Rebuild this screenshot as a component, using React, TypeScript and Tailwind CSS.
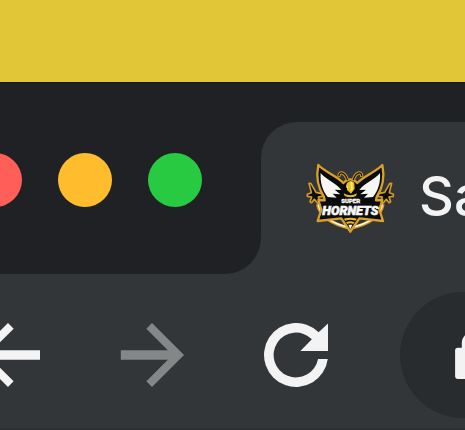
import type { ReactNode } from "react";

function HornetsLogo() {
  return (
    <svg viewBox="15 21 270 216" className="h-[72px] w-[90px] shrink-0" role="img" aria-label="Super Hornets">
      {/* swoosh behind the nameplate */}
      <path d="M53 148 Q62 200 151 220 Q240 200 249 148" fill="none" stroke="#d39a24" strokeWidth="10" />
      <path d="M55 148 Q64 199 151 218 Q238 199 247 148" fill="none" stroke="#fff8e2" strokeWidth="5" />
      {/* jets */}
      <g fill="#0b0d0e" stroke="#d39a24" strokeWidth="5" strokeLinejoin="round">
        <path d="M27 85 L33 86 L48 112 L67 116 L68 124 L55 126 L60 140 L53 145 L43 133 L35 143 L30 140 L35 126 L22 124 L22 118 L34 113 Z" />
        <path d="M275 85 L269 86 L254 112 L235 116 L234 124 L247 126 L242 140 L249 145 L259 133 L267 143 L272 140 L267 126 L280 124 L280 118 L268 113 Z" />
      </g>
      {/* wings and body outline */}
      <path d="M55 30 C76 52 113 64 130 84 Q151 62 172 84 C189 64 226 52 247 30 Q258 83 230 126 L228 136 L247 135 L238 164 L249 198 L178 190 L151 230 L124 190 L53 198 L64 164 L55 135 L74 136 L72 126 Q44 83 55 30Z" fill="#090b0c" stroke="#d9a029" strokeWidth="7" strokeLinejoin="round" />
      <path d="M62 54 C76 72 109 84 124 105 L104 104 L121 118 L98 116 L110 128 L83 126 C68 107 60 84 62 54Z" fill="#f6f6f4" />
      <path d="M240 54 C226 72 193 84 178 105 L198 104 L181 118 L204 116 L192 128 L219 126 C234 107 242 84 240 54Z" fill="#f6f6f4" />
      {/* antennae */}
      <g fill="none" strokeLinecap="round">
        <path d="M117 62 C117 48 135 52 142 74 M185 62 C185 48 167 52 160 74" stroke="#d39a24" strokeWidth="10" />
        <path d="M117 62 C117 48 135 52 142 74 M185 62 C185 48 167 52 160 74" stroke="#15130d" strokeWidth="4" />
      </g>
      {/* head */}
      <path d="M130 94 Q151 66 172 94 L167 112 L151 121 L135 112Z" fill="#070808" />
      <path d="M141 84 Q153 72 163 84 L164 101 L153 116 L141 105Z" fill="#e8bd1d" />
      <path d="M151 80 L157 80 L158 103 L153 108Z" fill="#fff073" />
      <path d="M139 84 L144 100 L139 98Z" fill="#faf4cd" />
      <path d="M131 115 Q151 127 171 115 L168 123 Q151 131 134 123Z" fill="#e4b726" />
      {/* nameplate */}
      <path d="M62 142 L119 142 L119 128 L184 128 L184 142 L240 142 L232 164 L241 190 L176 184 L126 184 L61 190 L70 164Z" fill="#0b0d0e" />
      <g fontWeight="900" textAnchor="middle" fill="#f7f7f5" stroke="#f7f7f5" fontFamily="Roboto, 'Liberation Sans', sans-serif">
        <text x="152" y="143" fontSize="18" strokeWidth="1">SUPER</text>
        <text x="151" y="181" fontSize="38" fontStyle="italic" strokeWidth="2">HORNETS</text>
      </g>
      {/* stinger */}
      <path d="M131 191 Q151 185 171 191 L166 197 Q151 191 136 197Z" fill="#e6b925" />
      <path d="M138 202 Q151 196 164 202 L160 207 Q151 202 142 207Z" fill="#e6b925" />
      <path d="M145 209 L157 209 L151 223Z" fill="#fffdf1" />
    </svg>
  );
}

function ToolButton({ label, disabled, children }: { label: string; disabled?: boolean; children: ReactNode }) {
  return (
    <button
      type="button"
      aria-label={label}
      disabled={disabled}
      className="size-16 shrink-0 text-[#f3f3f3] disabled:text-[#838787]"
    >
      <svg viewBox="4 4 16 16" fill="currentColor" className="size-full" aria-hidden="true">
        {children}
      </svg>
    </button>
  );
}

export default function App() {
  return (
    <main className="w-full overflow-hidden bg-[#323639] font-['Inter','Liberation_Sans',sans-serif]">
      <div className="h-[82px] bg-[#e1c638]" />
      <header>
        <div className="h-10 border-t border-[#16171d] bg-[#202124]" />
        <div className="flex h-[152px]">
          <div className="flex w-[261px] shrink-0 gap-9 rounded-br-[36px] bg-[#202124] pt-[31px]">
            <button type="button" aria-label="Close" className="-ml-8 size-[54px] shrink-0 rounded-full bg-[#ff5f58]" />
            <button type="button" aria-label="Minimize" className="size-[54px] shrink-0 rounded-full bg-[#ffbd2e]" />
            <button type="button" aria-label="Zoom" className="size-[54px] shrink-0 rounded-full bg-[#28ca42]" />
          </div>
          <div className="min-w-0 flex-1 bg-[#202124]">
            <div className="flex h-full items-center gap-6 overflow-hidden rounded-tl-[36px] bg-[#323639] pl-11">
              <HornetsLogo />
              <span className="mb-1 shrink-0 text-[54px] leading-[64px] font-medium text-[#f3f3f3]">Sa</span>
            </div>
          </div>
        </div>
      </header>
      <nav className="flex items-center gap-[72px] border-b-2 border-[#2d3033] pt-[18px] pb-2.5">
        <div className="-ml-6 flex shrink-0 gap-20">
          <ToolButton label="Back">
            <path d="M20 10.800H8.030l5.390-5.390L12 4l-8 8 8 8 1.410-1.410L8.030 13.200H20z" />
          </ToolButton>
          <ToolButton label="Forward" disabled>
            <path d="M12 4l-1.410 1.410L15.970 10.800H4.200v2.400h11.770l-5.380 5.390L12 20l8-8z" />
          </ToolButton>
          <ToolButton label="Reload">
            <path d="M17.660 6.340A8 8 0 1 0 19.940 13H17.510A5.600 5.600 0 1 1 15.960 8.040L13.100 11H20V4.100z" />
          </ToolButton>
        </div>
        <div className="flex h-[126px] min-w-0 flex-1 items-center overflow-hidden rounded-l-full bg-[#292c2f] pl-[55px]">
          <svg viewBox="4 1 16 21" fill="#f3f3f3" className="h-[47px] w-9 shrink-0" role="img" aria-label="Secure connection">
            <path d="M18 8h-1V6c0-2.760-2.240-5-5-5S7 3.240 7 6v2H5.200C4.500 8 4 8.500 4 9.200v11.600C4 21.500 4.500 22 5.200 22h13.600c.7 0 1.200-.5 1.200-1.200V9.200C20 8.500 19.500 8 18.800 8zm-2.900 0H8.900V6a3.100 3.100 0 0 1 6.200 0z" />
          </svg>
        </div>
      </nav>
    </main>
  );
}
